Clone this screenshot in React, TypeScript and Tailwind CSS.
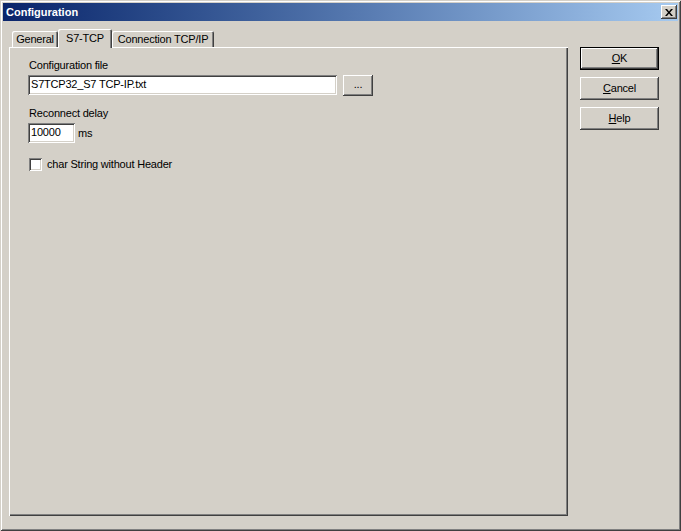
const raised =
  "shadow-[inset_-1px_-1px_#404040,inset_1px_1px_#ffffff,inset_-2px_-2px_#808080,inset_2px_2px_#d4d0c8]";
const sunken =
  "shadow-[inset_1px_1px_#808080,inset_-1px_-1px_#ffffff,inset_2px_2px_#404040,inset_-2px_-2px_#d4d0c8]";

const Tab = ({ label, width, active }: { label: string; width: string; active?: boolean }) => (
  <div
    className={`${width} ${
      active ? "relative z-10 h-[19px] pt-[3px]" : "mt-[2px] h-[16px] pt-[2px]"
    } rounded-t-[2px] bg-[#d4d0c8] text-center leading-[13px] shadow-[inset_1px_1px_#ffffff,inset_-1px_0_#404040,inset_-2px_0_#808080]`}
  >
    {label}
  </div>
);

const DialogButton = ({ children, isDefault }: { children: React.ReactNode; isDefault?: boolean }) => (
  <button
    className={`flex h-[23px] w-[79px] items-center justify-center bg-[#d4d0c8] leading-[13px] ${
      isDefault
        ? "border border-black shadow-[inset_-1px_-1px_#404040,inset_1px_1px_#ffffff,inset_-2px_-2px_#808080]"
        : raised
    }`}
  >
    {children}
  </button>
);

const App = () => {
  return (
    <div
      className="h-[531px] w-[681px] bg-[#d4d0c8] p-[3px] text-[11px] tracking-[-0.2px] text-black shadow-[inset_1px_1px_#d4d0c8,inset_-1px_-1px_#404040,inset_2px_2px_#ffffff,inset_-2px_-2px_#808080]"
      style={{ fontFamily: '"Liberation Sans", Arial, sans-serif' }}
    >
      {/* Title bar */}
      <div className="flex h-[18px] items-center justify-between bg-gradient-to-r from-[#0a246a] to-[#a6caf0] pl-[3px] pr-[1px]">
        <span className="text-[11px] font-bold tracking-normal text-white">Configuration</span>
        <div className={`flex h-[14px] w-[16px] items-center justify-center bg-[#d4d0c8] ${raised}`}>
          <svg width="8" height="7" viewBox="0 0 8 7">
            <path d="M0 0h2l2 2.4L6 0h2L5 3.5 8 7H6L4 4.6 2 7H0l3-3.5z" fill="#000" />
          </svg>
        </div>
      </div>

      {/* Body */}
      <div className="flex pl-[6px] pt-[8px]">
        <div className="w-[559px]">
          <div className="flex h-[18px] items-start pl-[3px]">
            <Tab label="General" width="w-[46px]" />
            <Tab label="S7-TCP" width="w-[54px]" active />
            <Tab label="Connection TCP/IP" width="w-[102px]" />
          </div>
          <div className="h-[469px] bg-[#d4d0c8] pl-[19px] pt-[12px] shadow-[inset_1px_1px_#ffffff,inset_-1px_-1px_#404040,inset_-2px_-2px_#808080]">
            <div className="ml-px h-[13px] leading-[13px]">Configuration file</div>
            <div className="mt-[3px] flex items-start">
              <div className={`h-[20px] w-[309px] bg-white pl-[3px] pt-[3px] leading-[13px] ${sunken}`}>
                S7TCP32_S7 TCP-IP.txt
              </div>
              <button className={`ml-[6px] h-[21px] w-[30px] bg-[#d4d0c8] pb-[2px] leading-[13px] ${raised}`}>
                ...
              </button>
            </div>

            <div className="ml-px mt-[11px] h-[13px] leading-[13px]">Reconnect delay</div>
            <div className="mt-[3px] flex items-center">
              <div className={`h-[20px] w-[47px] bg-white pl-[3px] pt-[3px] leading-[13px] ${sunken}`}>10000</div>
              <span className="ml-[3px] leading-[13px]">ms</span>
            </div>

            <div className="mt-[15px] flex items-center">
              <div className={`ml-px h-[13px] w-[13px] bg-white ${sunken}`} />
              <span className="ml-[5px] leading-[13px]">char String without Header</span>
            </div>
          </div>
        </div>

        {/* Buttons */}
        <div className="ml-[12px] flex flex-col gap-[7px] pt-[18px]">
          <DialogButton isDefault>
            <u>O</u>K
          </DialogButton>
          <DialogButton>
            <u>C</u>ancel
          </DialogButton>
          <DialogButton>
            <u>H</u>elp
          </DialogButton>
        </div>
      </div>
    </div>
  );
};

export default App;
